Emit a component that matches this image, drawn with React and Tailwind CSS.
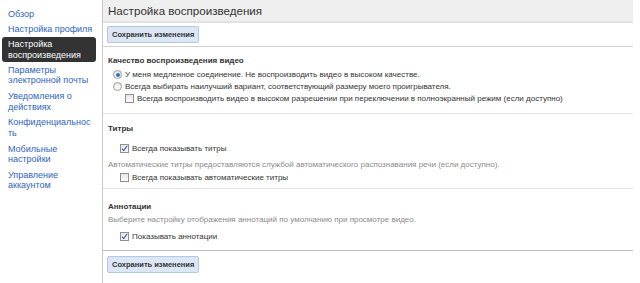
import React from "react";

const nav = [
  { label: "Обзор" },
  { label: "Настройка профиля" },
  { label: "Настройка воспроизведения", active: true },
  { label: "Параметры электронной почты" },
  { label: "Уведомления о действиях" },
  { label: "Конфиденциальность" },
  { label: "Мобильные настройки" },
  { label: "Управление аккаунтом" },
];

function Radio({ checked }) {
  return (
    <span className="relative inline-block w-[9px] h-[9px] shrink-0 rounded-full border border-[#9a9a9a] bg-gradient-to-b from-[#e8e8e8] to-[#fdfdfd]">
      {checked && (
        <span className="absolute left-[1.5px] top-[1.5px] w-[4px] h-[4px] rounded-full bg-[#2f6dc6]" />
      )}
    </span>
  );
}

function Check({ checked }) {
  return (
    <span className="relative inline-flex items-center justify-center w-[9px] h-[9px] shrink-0 border border-[#8f8f8f] bg-gradient-to-b from-[#e6e6e6] to-[#fbfbfb]">
      {checked && (
        <svg width="7" height="7" viewBox="0 0 7 7">
          <path d="M1 3.8 L2.8 5.6 L6 1" fill="none" stroke="#3a66b0" strokeWidth="1.3" />
        </svg>
      )}
    </span>
  );
}

function SaveButton() {
  return (
    <button className="h-[17px] px-[4px] rounded-[2px] border border-[#b6c7e0] bg-[#dce7f6] text-[7.5px] font-bold text-[#333] leading-none">
      Сохранить изменения
    </button>
  );
}

export default function App() {
  return (
    <div className="w-[640px] h-[283px] overflow-hidden bg-white flex text-[8px] text-[#333]" style={{ fontFamily: '"Liberation Sans", Arial, sans-serif' }}>
      <div className="w-[102px] shrink-0 pt-[6px] pl-[2px] text-[9px]">
        {nav.map((n) =>
          n.active ? (
            <div key={n.label} className="w-[94px] rounded-[3px] bg-[#333] text-white px-[6px] py-[1.5px] leading-[11px]">
              {n.label}
            </div>
          ) : (
            <div key={n.label} className="w-[97px] px-[6px] py-[2.6px] leading-[10.5px] text-[#2d64bd] break-words">
              {n.label}
            </div>
          )
        )}
      </div>

      <div className="w-[531px] shrink-0 border-l border-[#c8c8c8] flex flex-col">
        <div className="h-[23px] bg-[#efefef] border-b-2 border-[#e2e2e2] pl-[5px] flex items-center text-[11.6px] text-[#333]">
          Настройка воспроизведения
        </div>
        <div className="h-[24px] pl-[4px] flex items-center border-b border-[#cfcfcf]">
          <SaveButton />
        </div>

        <div className="pl-[5px] pt-[8px] pb-[9px] border-b border-[#e4e4e4]">
          <div className="font-bold leading-[12px]">Качество воспроизведения видео</div>
          <div className="mt-[2px] flex flex-col gap-[1px] leading-[11px]">
            <div className="flex items-center gap-[3px] pl-[5px]">
              <Radio checked />
              <span>У меня медленное соединение. Не воспроизводить видео в высоком качестве.</span>
            </div>
            <div className="flex items-center gap-[3px] pl-[5px]">
              <Radio />
              <span>Всегда выбирать наилучший вариант, соответствующий размеру моего проигрывателя.</span>
            </div>
            <div className="flex items-center gap-[3px] pl-[17px]">
              <Check />
              <span>Всегда воспроизводить видео в высоком разрешении при переключении в полноэкранный режим (если доступно)</span>
            </div>
          </div>
        </div>

        <div className="pl-[5px] pt-[9px] pb-[5px] border-b border-[#e4e4e4]">
          <div className="font-bold leading-[12px]">Титры</div>
          <div className="mt-[8px] flex items-center gap-[3px] pl-[12px] leading-[11px]">
            <Check checked />
            <span>Всегда показывать титры</span>
          </div>
          <div className="mt-[5px] text-[#8a8a8a] leading-[11px]">
            Автоматические титры предоставляются службой автоматического распознавания речи (если доступно).
          </div>
          <div className="mt-[2px] flex items-center gap-[3px] pl-[12px] leading-[11px]">
            <Check />
            <span>Всегда показывать автоматические титры</span>
          </div>
        </div>

        <div className="pl-[5px] pt-[12px] pb-[8px] border-b border-[#bdbdbd]">
          <div className="font-bold leading-[12px]">Аннотации</div>
          <div className="mt-[1px] text-[#8a8a8a] leading-[11px]">
            Выберите настройку отображения аннотаций по умолчанию при просмотре видео.
          </div>
          <div className="mt-[6px] flex items-center gap-[3px] pl-[12px] leading-[11px]">
            <Check checked />
            <span>Показывать аннотации</span>
          </div>
        </div>

        <div className="pl-[4px] pt-[5px]">
          <SaveButton />
        </div>
      </div>
    </div>
  );
}
